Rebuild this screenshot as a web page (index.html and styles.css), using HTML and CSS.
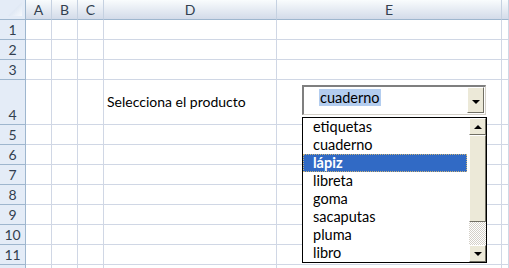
FILE: index.html
```html
<!DOCTYPE html>
<html lang="es">
<head>
  <meta charset="UTF-8" />
  <title>Selecciona el producto</title>
  <link rel="stylesheet" href="styles.css">
</head>
<body>
  <div id="sheet">
    <div class="row head">
      <div class="corner"><span class="tri"></span></div>
      <div class="colhead">A</div><div class="colhead">B</div><div class="colhead">C</div>
      <div class="colhead">D</div><div class="colhead">E</div><div class="colhead"></div>
    </div>
    <div class="row"><div class="rowhead">1</div><div></div><div></div><div></div><div></div><div></div><div></div></div>
    <div class="row"><div class="rowhead">2</div><div></div><div></div><div></div><div></div><div></div><div></div></div>
    <div class="row"><div class="rowhead">3</div><div></div><div></div><div></div><div></div><div></div><div></div></div>
    <div class="row tall"><div class="rowhead">4</div><div></div><div></div><div></div><div class="label">Selecciona el producto</div><div></div><div></div></div>
    <div class="row"><div class="rowhead">5</div><div></div><div></div><div></div><div></div><div></div><div></div></div>
    <div class="row"><div class="rowhead">6</div><div></div><div></div><div></div><div></div><div></div><div></div></div>
    <div class="row"><div class="rowhead">7</div><div></div><div></div><div></div><div></div><div></div><div></div></div>
    <div class="row"><div class="rowhead">8</div><div></div><div></div><div></div><div></div><div></div><div></div></div>
    <div class="row"><div class="rowhead">9</div><div></div><div></div><div></div><div></div><div></div><div></div></div>
    <div class="row"><div class="rowhead">10</div><div></div><div></div><div></div><div></div><div></div><div></div></div>
    <div class="row"><div class="rowhead">11</div><div></div><div></div><div></div><div></div><div></div><div></div></div>
    <div class="row"><div class="rowhead"></div><div></div><div></div><div></div><div></div><div></div><div></div></div>

    <div id="combo">
      <div class="value"><span class="sel">cuaderno</span></div>
      <div class="btn"><span class="arrow down"></span></div>
    </div>

    <div id="list">
      <ul class="items">
        <li>etiquetas</li>
        <li>cuaderno</li>
        <li class="active">lápiz</li>
        <li>libreta</li>
        <li>goma</li>
        <li>sacaputas</li>
        <li>pluma</li>
        <li>libro</li>
      </ul>
      <div class="scroll">
        <div class="sbtn"><span class="arrow up"></span></div>
        <div class="thumb"></div>
        <div class="track"></div>
        <div class="sbtn"><span class="arrow down"></span></div>
      </div>
    </div>
  </div>
</body>
</html>
```

FILE: styles.css
```css
body {
  margin: 0;
  overflow: hidden;
  background: #fff;
  font-family: Lato, 'Open Sans', sans-serif;
  font-size: 14px;
  color: #000;
}
#sheet {
  position: relative;
  width: 509px;
  height: 268px;
  overflow: hidden;
}
.row {
  display: grid;
  grid-template-columns: 26px 26px 26px 26px 173px 225px 1fr;
  height: 20px;
}
.row.tall {
  height: 45px;
}
.row > div {
  box-sizing: border-box;
  border-right: 1px solid #d0d7e5;
  border-bottom: 1px solid #d0d7e5;
}
.head > div {
  background: linear-gradient(#f9fcfd, #d3dbe9);
  border-right: 1px solid #c5d1e1;
  border-bottom: 1px solid #9eb6ce;
  color: #333f4f;
  text-align: center;
  line-height: 19px;
  font-size: 14px;
}
.head > .corner {
  position: relative;
  background: #e4ecf7;
  border-right: 1px solid #9eb6ce;
}
.tri {
  position: absolute;
  right: 3px;
  bottom: 3px;
  width: 14px;
  height: 14px;
  background: linear-gradient(135deg, #c9d8ec, #f5f8fc);
  clip-path: polygon(100% 0, 100% 100%, 0 100%);
}
.row > .rowhead {
  background: #e4ecf7;
  border-right: 1px solid #9eb6ce;
  border-bottom: 1px solid #9eb6ce;
  color: #333f4f;
  font-size: 14px;
  text-align: center;
  display: flex;
  align-items: flex-end;
  justify-content: center;
  padding-bottom: 1px;
  line-height: 17px;
}
.label {
  display: flex;
  align-items: center;
  padding-left: 3px;
  white-space: nowrap;
  padding-bottom: 1px;
}

/* combo box over E4 */
#combo {
  position: absolute;
  left: 302px;
  top: 85px;
  width: 184px;
  height: 30px;
  box-sizing: border-box;
  background: #fff;
  border-top: 2px solid #7f7f7f;
  border-left: 2px solid #7f7f7f;
  border-right: 1px solid #d4d0c8;
  border-bottom: 1px solid #d4d0c8;
  display: flex;
}
#combo .value {
  flex: 1;
  padding: 2px 0 0 15px;
  font-size: 14.5px;
}
#combo .sel {
  background: #b3cdef;
  padding: 0 1px;
  line-height: 17px;
  display: inline-block;
}
.btn, .sbtn {
  box-sizing: border-box;
  width: 17px;
  background: #ece9d8;
  border-top: 1px solid #fff;
  border-left: 1px solid #fff;
  border-right: 1px solid #716f64;
  border-bottom: 1px solid #716f64;
  display: flex;
  align-items: center;
  justify-content: center;
}
#combo .btn {
  height: 26px;
  margin: 0 1px 0 0;
  padding-top: 3px;
}
.arrow {
  width: 0;
  height: 0;
  border-left: 4px solid transparent;
  border-right: 4px solid transparent;
}
.arrow.down {
  border-top: 4px solid #000;
}
.arrow.up {
  border-bottom: 4px solid #000;
}

/* open list */
#list {
  position: absolute;
  left: 302px;
  top: 117px;
  width: 185px;
  height: 146px;
  box-sizing: border-box;
  border: 1px solid #000;
  background: #fff;
  display: flex;
}
.items {
  list-style: none;
  margin: 0;
  padding: 0;
  flex: 1;
}
.items li {
  height: 18px;
  line-height: 18px;
  padding-left: 10px;
  font-size: 14.5px;
}
.items li.active {
  background: #316ac5;
  color: #fff;
  font-weight: bold;
  outline: 1px dotted #c9b37a;
  outline-offset: -1px;
  margin-right: 2px;
}
.scroll {
  width: 17px;
  display: flex;
  flex-direction: column;
}
.scroll .sbtn {
  height: 17px;
}
.thumb {
  box-sizing: border-box;
  height: 87px;
  background: #ece9d8;
  border-top: 1px solid #fff;
  border-left: 1px solid #fff;
  border-right: 1px solid #716f64;
  border-bottom: 1px solid #716f64;
}
.track {
  flex: 1;
  background-color: #fff;
  background-image: repeating-conic-gradient(#d4d0c8 0 25%, #fff 0 50%);
  background-size: 2px 2px;
}
```
